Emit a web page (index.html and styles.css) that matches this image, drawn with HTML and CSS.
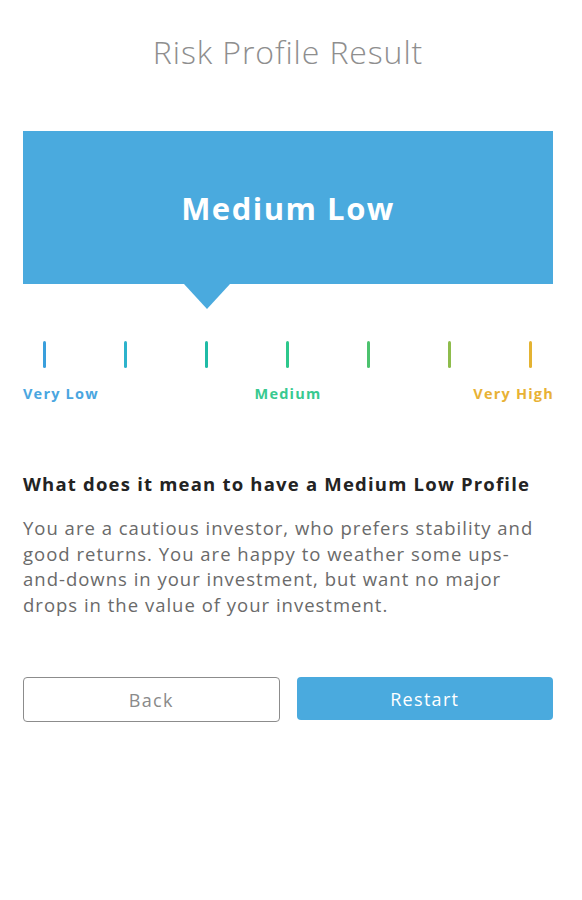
FILE: index.html
```html
<!DOCTYPE html>
<html lang="en">
<head>
<meta charset="utf-8">
<title>Risk Profile Result</title>
<link rel="stylesheet" href="styles.css">
</head>
<body>
<main class="page">
  <h1 class="title">Risk Profile Result</h1>
  <section class="result">
    <div class="result-box">Medium Low</div>
    <div class="result-pointer"></div>
  </section>
  <div class="scale">
    <span class="tick t1"></span>
    <span class="tick t2"></span>
    <span class="tick t3"></span>
    <span class="tick t4"></span>
    <span class="tick t5"></span>
    <span class="tick t6"></span>
    <span class="tick t7"></span>
  </div>
  <div class="scale-labels">
    <span class="lbl lbl-low">Very Low</span>
    <span class="lbl lbl-mid">Medium</span>
    <span class="lbl lbl-high">Very High</span>
  </div>
  <h2 class="heading">What does it mean to have a Medium Low Profile</h2>
  <p class="desc">You are a cautious investor, who prefers stability and good returns. You are happy to weather some ups-and-downs in your investment, but want no major drops in the value of your investment.</p>
  <div class="actions">
    <button class="btn btn-back">Back</button>
    <button class="btn btn-restart">Restart</button>
  </div>
</main>
</body>
</html>
```
FILE: styles.css
```css
* { box-sizing: border-box; }
html, body { margin: 0; padding: 0; background: #fff; }
body { font-family: "Open Sans", "DejaVu Sans", sans-serif; }
.page { width: 582px; padding: 0 29px 0 23px; }
.title {
  margin: 0;
  padding-top: 32px;
  height: 131px;
  text-align: center;
  font-weight: 300;
  font-size: 32px;
  line-height: 40px;
  color: #8e8e8e;
  letter-spacing: 0.9px;
}
.result { position: relative; }
.result-box {
  height: 153px;
  background: #4aaade;
  color: #fff;
  display: flex;
  align-items: center;
  justify-content: center;
  font-weight: 700;
  font-size: 31px;
  letter-spacing: 1.5px;
}
.result-pointer {
  width: 0; height: 0;
  margin-left: 161px;
  border-left: 23px solid transparent;
  border-right: 23px solid transparent;
  border-top: 25px solid #4aaade;
}
.scale {
  display: flex;
  justify-content: space-between;
  padding: 0 21px 0 20px;
  margin-top: 32px;
}
.tick { width: 3px; height: 27px; border-radius: 2px; }
.t1 { background: #3a9fdc; }
.t2 { background: #2db3cc; }
.t3 { background: #1fbba6; }
.t4 { background: #2dc88c; }
.t5 { background: #4cc26e; }
.t6 { background: #8ebc4c; }
.t7 { background: #e4b332; }
.scale-labels {
  display: grid;
  grid-template-columns: 1fr auto 1fr;
  margin-top: 16px;
  font-weight: 700;
  font-size: 14.5px;
  line-height: 20px;
  letter-spacing: 1.2px;
}
.lbl-low { color: #4aa6e0; justify-self: start; }
.lbl-mid { color: #38c990; justify-self: center; }
.lbl-high { color: #e8b235; justify-self: end; margin-right: -1px; }
.heading {
  margin: 68px 0 0;
  font-size: 18.5px;
  font-weight: 700;
  line-height: 24px;
  color: #232323;
  letter-spacing: 1.2px;
}
.desc {
  margin: 19px 0 0;
  max-width: 518px;
  font-size: 18.5px;
  line-height: 25.5px;
  color: #6a6a6a;
  letter-spacing: 1px;
}
.actions {
  display: grid;
  grid-template-columns: 1fr 1fr;
  gap: 17px;
  margin-top: 60px;
}
.btn {
  height: 45px;
  border-radius: 4px;
  font-family: inherit;
  font-size: 18px;
  letter-spacing: 1.3px;
  cursor: pointer;
}
.btn-back {
  background: #fff;
  border: 1.5px solid #8c8c8c;
  color: #8a8a8a;
}
.btn-restart {
  background: #4aaade;
  border: none;
  color: #fff;
  height: 43px;
}
```
